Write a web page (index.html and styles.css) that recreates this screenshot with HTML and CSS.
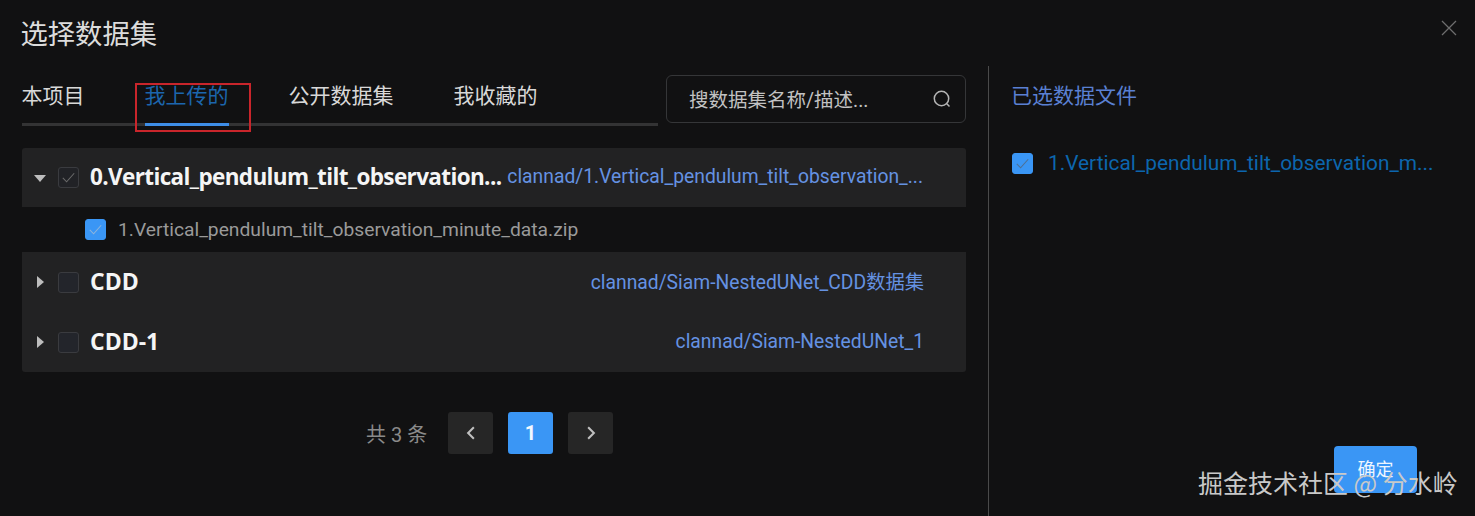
FILE: index.html
```html
<!DOCTYPE html>
<html lang="zh">
<head>
<meta charset="utf-8">
<title>选择数据集</title>
<link rel="stylesheet" href="styles.css">
</head>
<body>
<div class="dialog">
  <header class="head">
    <h1 class="title">选择数据集</h1>
    <svg class="close" viewBox="0 0 16 16"><path d="M1 1L15 15M15 1L1 15"/></svg>
  </header>
  <div class="body">
    <main class="left">
      <div class="toolbar">
        <nav class="tabs">
          <span class="tab">本项目</span>
          <span class="tab active">我上传的<span class="marker"></span></span>
          <span class="tab">公开数据集</span>
          <span class="tab">我收藏的</span>
        </nav>
        <div class="search">
          <span class="search-text">搜数据集名称/描述...</span>
          <svg class="search-icon" viewBox="0 0 20 20"><circle cx="9.5" cy="9.5" r="7.2"/><path d="M14.8 14.8L17.5 17.5"/></svg>
        </div>
      </div>
      <div class="list">
        <div class="row">
          <svg class="caret" viewBox="0 0 14 14"><path d="M1 4H13L7 11Z"/></svg>
          <span class="check half"><svg viewBox="0 0 20 20"><path d="M4 10.5L8 14.5L16 5.5"/></svg></span>
          <span class="name name-long">0.Vertical_pendulum_tilt_observation...</span>
          <span class="path path-long">clannad/1.Vertical_pendulum_tilt_observation_...</span>
        </div>
        <div class="file">
          <span class="check on"><svg viewBox="0 0 20 20"><path d="M4 10.5L8 14.5L16 5.5"/></svg></span>
          <span class="file-name">1.Vertical_pendulum_tilt_observation_minute_data.zip</span>
        </div>
        <div class="row">
          <svg class="caret" viewBox="0 0 14 14"><path d="M4 1V13L11 7Z"/></svg>
          <span class="check"></span>
          <span class="name">CDD</span>
          <span class="path">clannad/Siam-NestedUNet_CDD数据集</span>
        </div>
        <div class="row">
          <svg class="caret" viewBox="0 0 14 14"><path d="M4 1V13L11 7Z"/></svg>
          <span class="check"></span>
          <span class="name">CDD-1</span>
          <span class="path">clannad/Siam-NestedUNet_1</span>
        </div>
      </div>
      <div class="pager">
        <span class="total">共 3 条</span>
        <span class="page"><svg viewBox="0 0 14 14"><path d="M9.5 2L4.5 7L9.5 12"/></svg></span>
        <span class="page current">1</span>
        <span class="page"><svg viewBox="0 0 14 14"><path d="M4.5 2L9.5 7L4.5 12"/></svg></span>
      </div>
    </main>
    <aside class="right">
      <h2 class="selected-title">已选数据文件</h2>
      <div class="selected">
        <span class="check on"><svg viewBox="0 0 20 20"><path d="M4 10.5L8 14.5L16 5.5"/></svg></span>
        <span class="selected-name">1.Vertical_pendulum_tilt_observation_m...</span>
      </div>
      <div class="actions"><button class="confirm">确定</button></div>
    </aside>
  </div>
  <div class="watermark">掘金技术社区 @ 分水岭</div>
  <div class="annotation"></div>
</div>
</body>
</html>
```
FILE: styles.css
```css
* { box-sizing: border-box; }
html, body { margin: 0; height: 100%; }
body {
  background: #111112;
  font-family: Roboto, "Noto Sans CJK SC", sans-serif;
  overflow: hidden;
}
.dialog { position: relative; width: 1475px; height: 516px; }
.head {
  display: flex;
  justify-content: space-between;
  align-items: flex-start;
  height: 66px;
  padding: 0 18px 0 20.5px;
}
.title {
  margin: 16px 0 0;
  font-size: 27.3px;
  line-height: 38px;
  font-weight: 400;
  color: #dcdcdc;
}
.close { width: 16px; height: 16px; margin-top: 20px; }
.close path { stroke: #6e6e6e; stroke-width: 1.3; fill: none; }
.body { display: flex; height: 450px; }
.left { width: 966px; padding-left: 22px; flex: none; }
.toolbar { display: flex; height: 82px; padding-top: 9px; align-items: flex-start; }
.tabs {
  display: flex;
  gap: 60px;
  width: 636.5px;
  height: 51px;
  margin-left: -0.5px;
  margin-right: 8px;
  border-bottom: 3px solid #333334;
  padding-top: 6px;
}
.tab {
  position: relative;
  font-size: 21px;
  line-height: 30px;
  color: #d8d8d8;
  height: 42px;
}
.tab.active { color: #1c66ad; }
.marker {
  position: absolute;
  left: 0;
  right: 0;
  top: 42px;
  height: 3px;
  background: #3e8ee8;
}
.search {
  display: flex;
  align-items: center;
  justify-content: space-between;
  width: 300px;
  height: 48px;
  border: 1px solid #353638;
  border-radius: 6px;
  padding: 0 13px 0 22px;
}
.search-text { font-size: 19.5px; color: #c2c2c2; margin-bottom: 2px; }
.search-icon { width: 20px; height: 20px; }
.search-icon circle, .search-icon path { fill: none; stroke: #b5b5b5; stroke-width: 1.5; }
.list { width: 944px; }
.row {
  display: flex;
  align-items: center;
  height: 60px;
  background: #222223;
  padding-left: 11px;
}
.row:first-child { height: 59px; border-radius: 3px 3px 0 0; }
.row:last-child { border-radius: 0 0 3px 3px; }
.caret { width: 14px; height: 14px; flex: none; fill: #bdbdbd; }
.check {
  display: inline-flex;
  flex: none;
  width: 21px;
  height: 21px;
  margin-left: 11px;
  border: 1px solid #3a3b3f;
  border-radius: 3px;
  background: #23252b;
}
.check svg { width: 19px; height: 19px; }
.check path { fill: none; stroke: #6a6a6a; stroke-width: 1.1; }
.check.half { background: #212226; }
.check.on { background: #3a96f5; border-color: #3a96f5; margin-left: 0; }
.check.on path { stroke: #8db4dc; }
.selected .check.on path { stroke: #4f6f92; }
.name {
  margin-left: 11px;
  margin-bottom: 2px;
  font-family: "Open Sans", "Noto Sans CJK SC", sans-serif;
  font-size: 23px;
  font-weight: 700;
  color: #f5f5f5;
  white-space: nowrap;
}
.name-long { font-size: 22.5px; letter-spacing: -0.63px; }
.path {
  margin-left: auto;
  margin-bottom: 2px;
  padding-right: 42px;
  font-size: 19.3px;
  color: #6592e2;
  white-space: nowrap;
}
.path-long { padding-right: 43px; }
.file {
  display: flex;
  align-items: center;
  height: 45px;
  padding-left: 63px;
}
.file-name {
  margin-left: 12px;
  font-size: 19.25px;
  color: #9a9a9a;
  white-space: nowrap;
}
.pager {
  display: flex;
  align-items: center;
  height: 42px;
  margin-top: 40px;
  padding-left: 344px;
}
.total { width: 82px; font-size: 20px; color: #8a8a8a; white-space: pre; }
.page {
  display: flex;
  align-items: center;
  justify-content: center;
  width: 45px;
  height: 42px;
  margin-right: 15px;
  border-radius: 3px;
  background: #262626;
  font-size: 20px;
  font-weight: 700;
}
.page svg { width: 16px; height: 16px; }
.page path { fill: none; stroke: #c0c0c0; stroke-width: 1.8; }
.page.current { background: #3a96f5; color: #f2f8ff; }
.right {
  position: relative;
  flex: 1;
  margin-left: 22px;
  border-left: 1px solid #4a4a4a;
  padding: 0 0 0 23px;
}
.selected-title {
  margin: 15px 0 0 -1px;
  font-size: 21px;
  line-height: 30px;
  font-weight: 400;
  color: #5a80d2;
}
.selected { display: flex; align-items: center; margin-top: 40px; }
.selected-name { margin-left: 15px; font-size: 20.85px; color: #0c66ad; white-space: nowrap; }
.actions { position: absolute; right: 58px; bottom: 23px; }
.confirm {
  width: 83px;
  height: 47px;
  border: 0;
  border-radius: 4px;
  padding: 0 0 4px;
  background: #3a96f5;
  color: #eef6ff;
  font: 400 18px "Noto Sans CJK SC", sans-serif;
}
.watermark {
  position: absolute;
  left: 1198px;
  top: 464px;
  font: 400 25px/36px "Noto Sans CJK SC", sans-serif;
  color: #c9c9c9;
  white-space: nowrap;
}
.annotation {
  position: absolute;
  left: 135px;
  top: 83px;
  width: 116px;
  height: 49px;
  border: 2px solid #c9252b;
}
```
